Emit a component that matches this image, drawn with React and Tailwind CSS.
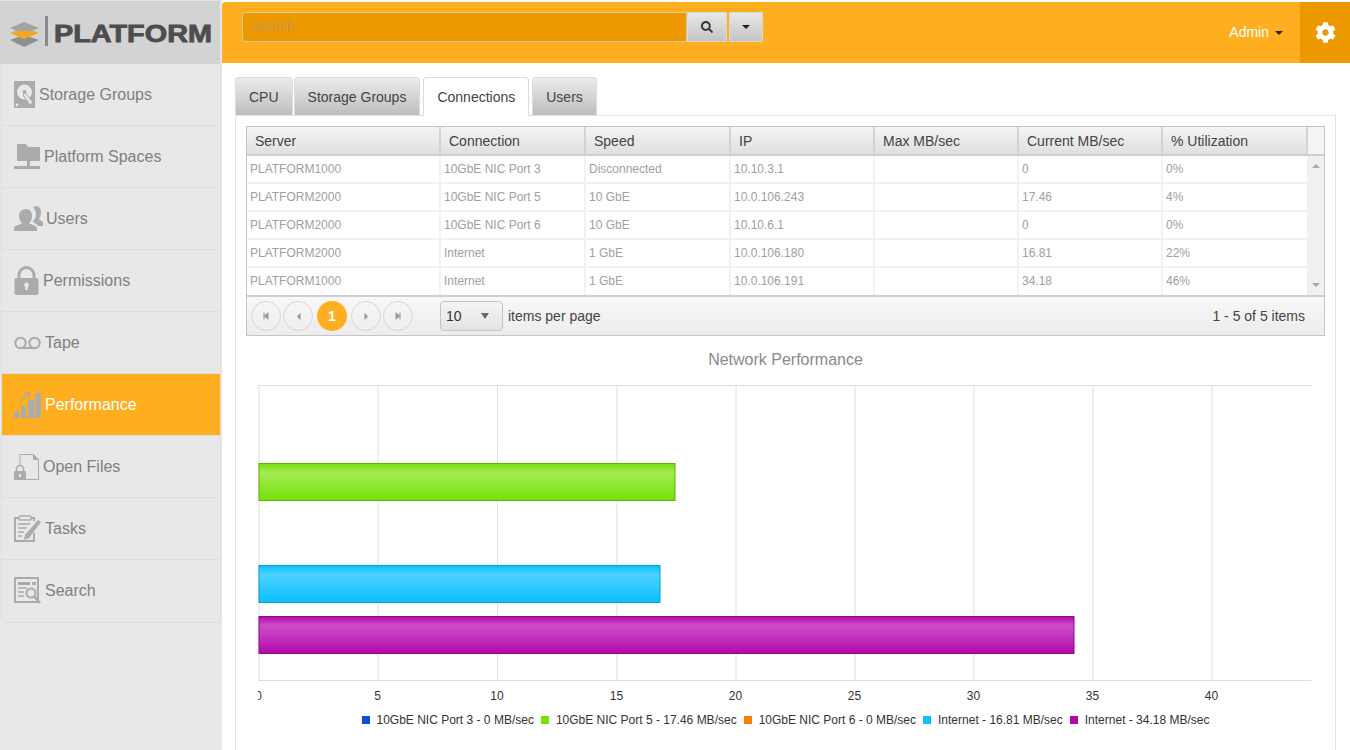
import { FaSearch, FaCog, FaStepBackward, FaStepForward, FaCaretLeft, FaCaretRight } from "react-icons/fa";

const GRAY = "#ababab";

function DiskIcon() {
    return (
        <svg width="25" height="28" viewBox="0 0 25 28">
            <path fill={GRAY} d="M0 0h21v27H0z" />
            <circle cx="10.5" cy="11" r="7.5" fill="#e8e8e8" />
            <circle cx="10.5" cy="11" r="2" fill={GRAY} />
            <path fill="#e8e8e8" stroke={GRAY} d="M9 14l2-2 8 9-3 3z" />
            <circle cx="3" cy="24" r="1.4" fill="#e8e8e8" />
        </svg>
    );
}

function SpacesIcon() {
    return (
        <svg width="30" height="28" viewBox="0 0 30 28">
            <path fill={GRAY} d="M3 1h9l2 3h12v14H3z" />
            <path fill={GRAY} d="M13 18h3v5h-3zM0 23h26v3H0z" />
        </svg>
    );
}

function UsersIcon() {
    return (
        <svg width="32" height="26" viewBox="0 0 32 26">
            <path fill={GRAY} d="M19 1c4-2 8 0 8 5 0 3-1 5-2 7 2 2 4 2 4 4v3h-5c-1-3-5-3-5-5 2-2 3-4 3-7 0-2-1-5-3-7z" />
            <path fill={GRAY} d="M12 3c4 0 6 3 6 7 0 3-1 5-3 7 2 2 8 2 8 6v2H0v-2c0-4 6-4 8-6-2-2-3-4-3-7 0-4 3-7 7-7z" />
        </svg>
    );
}

function LockIcon() {
    return (
        <svg width="29" height="30" viewBox="0 0 29 30">
            <path fill="none" stroke={GRAY} strokeWidth="3" d="M5 13V9a7.5 7.5 0 0 1 15 0v4" />
            <rect x="0.5" y="12" width="24" height="17" rx="2" fill={GRAY} />
            <circle cx="12.5" cy="19" r="2.4" fill="#e8e8e8" />
            <path fill="#e8e8e8" d="M11.3 19h2.4v5h-2.4z" />
        </svg>
    );
}

function TapeIcon() {
    return (
        <svg width="31" height="14" viewBox="0 0 31 14">
            <circle cx="6.5" cy="7" r="5.2" fill="none" stroke={GRAY} strokeWidth="2" />
            <circle cx="20.5" cy="7" r="5.2" fill="none" stroke={GRAY} strokeWidth="2" />
            <path fill={GRAY} d="M6 11h15v2H6z" />
        </svg>
    );
}

function BarsIcon() {
    return (
        <svg width="31" height="28" viewBox="0 0 31 28">
            <path fill={GRAY} d="M0 20h5v7H0zM7 15h5v12H7zM14 9h6v18h-6zM21 2h6v25h-6z" />
            <path fill="none" stroke={GRAY} strokeWidth="1.5" d="M7 9l7-6M10 2h5v5" />
        </svg>
    );
}

function FileLockIcon() {
    return (
        <svg width="29" height="28" viewBox="0 0 29 28">
            <path fill="none" stroke={GRAY} strokeWidth="1" d="M6 13V1.5h13.500l5 5v20h-13" />
            <path fill={GRAY} d="M19 1v6h6z" />
            <path fill="none" stroke={GRAY} strokeWidth="1.500" d="M2.500 18v-2a3.500 3.500 0 0 1 7 0v2" />
            <rect x="0" y="18" width="12" height="9" rx="1" fill={GRAY} />
            <rect x="5" y="21" width="2" height="3" fill="#e8e8e8" />
        </svg>
    );
}

function TasksIcon() {
    return (
        <svg width="31" height="28" viewBox="0 0 31 28">
            <path fill="none" stroke={GRAY} strokeWidth="2" d="M20 6V3h-3M5 3H1v23h19v-8" />
            <rect x="5" y="1" width="12" height="4" rx="1" fill="none" stroke={GRAY} strokeWidth="1.500" />
            <path stroke={GRAY} strokeWidth="1.500" d="M4 9h12M4 13h9M4 17h6M4 21h4" />
            <path fill={GRAY} d="M24 5l3 2-12 16-5 2 1-5z" />
        </svg>
    );
}

function SearchDocIcon() {
    return (
        <svg width="31" height="28" viewBox="0 0 31 28">
            <path fill="none" stroke={GRAY} strokeWidth="2" d="M1 1h23v24H1z" />
            <path fill={GRAY} d="M4 5h12v3H4zM18 5h4v3h-4z" />
            <path stroke={GRAY} strokeWidth="1.500" d="M4 11h9M4 15h6M4 19h6" />
            <circle cx="17" cy="16" r="4.500" fill="#e8e8e8" stroke={GRAY} strokeWidth="2" />
            <path stroke={GRAY} strokeWidth="2.500" d="M20 19l6 7" />
        </svg>
    );
}

const menu = [
    { label: "Storage Groups", icon: DiskIcon },
    { label: "Platform Spaces", icon: SpacesIcon },
    { label: "Users", icon: UsersIcon },
    { label: "Permissions", icon: LockIcon },
    { label: "Tape", icon: TapeIcon },
    { label: "Performance", icon: BarsIcon, active: true },
    { label: "Open Files", icon: FileLockIcon },
    { label: "Tasks", icon: TasksIcon },
    { label: "Search", icon: SearchDocIcon },
];

const rows = [
    ["PLATFORM1000", "10GbE NIC Port 3", "Disconnected", "10.10.3.1", "", "0", "0%"],
    ["PLATFORM2000", "10GbE NIC Port 5", "10 GbE", "10.0.106.243", "", "17.46", "4%"],
    ["PLATFORM2000", "10GbE NIC Port 6", "10 GbE", "10.10.6.1", "", "0", "0%"],
    ["PLATFORM2000", "Internet", "1 GbE", "10.0.106.180", "", "16.81", "22%"],
    ["PLATFORM1000", "Internet", "1 GbE", "10.0.106.191", "", "34.18", "46%"],
];

const columns = ["Server", "Connection", "Speed", "IP", "Max MB/sec", "Current MB/sec", "% Utilization"];
const tabs = ["CPU", "Storage Groups", "Connections", "Users"];

const legend = [
    ["10GbE NIC Port 3 - 0 MB/sec", "bg-[#0a4be0]"],
    ["10GbE NIC Port 5 - 17.46 MB/sec", "bg-[#76e008]"],
    ["10GbE NIC Port 6 - 0 MB/sec", "bg-[#ff7f00]"],
    ["Internet - 16.81 MB/sec", "bg-[#0cbfff]"],
    ["Internet - 34.18 MB/sec", "bg-[#b308a9]"],
];

function Sidebar() {
    return (
        <div className="w-[222px] shrink-0 bg-[#e8e8e8]">
            <div className="h-[64px] bg-[#d3d3d3] border-t border-[#e4e4e4] border-r-2 border-r-[#e8e8e8] flex items-center pl-[9px]">
                <svg width="206" height="34" viewBox="0 0 206 34">
                    <path fill="#a3a3a3" d="M1 12l14-6 15 6-15 6z" />
                    <path fill="#8f8f8f" d="M1 24l14-5 15 5-15 7z" />
                    <path fill="#f5a623" d="M1 17l5-2h19l5 2-15 6z" />
                    <path fill="#8a8a8a" d="M36 0h3v30h-3z" />
                    <text x="45" y="26" textLength="158" lengthAdjust="spacingAndGlyphs" fontSize="23" fontWeight="700" fill="#4d4d4d" stroke="#4d4d4d" strokeWidth="0.8">PLATFORM</text>
                </svg>
            </div>
            <div className="mx-[1px] mr-[1px] border border-[#dcdcdc] border-t-0 rounded-b-[4px] overflow-hidden">
                {menu.map((item) => {
                    const Icon = item.icon;
                    return (
                        <div
                            key={item.label}
                            className={`h-[62px] flex items-center pl-[12px] border-b border-[#dedede] last:border-b-0 text-[16px] ${item.active ? "bg-[#ffae1f] text-white" : "text-[#808080]"}`}
                        >
                            <Icon />
                            <span>{item.label}</span>
                        </div>
                    );
                })}
            </div>
        </div>
    );
}

function Topbar() {
    return (
        <div className="mt-[2px] h-[61px] bg-[#ffae1f] rounded-tl-[4px] flex items-start shrink-0">
            <div className="mt-[10px] ml-[20px] flex">
                <div className="w-[445px] h-[30px] bg-[#ee9800] border border-[#d9c9a5] rounded-l-[4px] px-[7px] text-[14px] leading-[26px] text-[#c49a4a]">
                    Search
                </div>
                <div className="w-[40px] h-[30px] flex items-center justify-center bg-gradient-to-b from-[#e8e8e8] to-[#c4c4c4] text-[#333] border border-[#d8d8d8]">
                    <FaSearch size={12} />
                </div>
                <div className="ml-[2px] w-[34px] h-[30px] flex items-center justify-center bg-gradient-to-b from-[#e8e8e8] to-[#c4c4c4] border border-[#d8d8d8]">
                    <span className="border-x-[4px] border-x-transparent border-t-[4px] border-t-[#222]" />
                </div>
            </div>
            <div className="ml-auto h-full flex items-center text-white text-[14px]">
                Admin
                <span className="ml-[6px] mr-[17px] border-x-[4px] border-x-transparent border-t-[4px] border-t-[#222]" />
            </div>
            <div className="w-[50px] h-full bg-[#ee9800] flex items-center justify-center text-white">
                <FaCog size={21} />
            </div>
        </div>
    );
}

function PagerButton({ children }) {
    return (
        <div className="w-[30px] h-[30px] rounded-full border border-[#d6d6d6] flex items-center justify-center text-[#9a9a9a]">
            {children}
        </div>
    );
}

function Grid() {
    return (
        <div className="border border-[#c4c4c4]">
            <div className="flex h-[29px] border-b-2 border-[#cfcfcf]">
                <div className="w-[1061px] grid grid-cols-[194px_145px_145px_144px_144px_144px_145px] bg-gradient-to-b from-[#f4f4f4] to-[#e0e0e0]">
                    {columns.map((c) => (
                        <div key={c} className="border-r-2 border-[#d4d4d4] pl-[8px] text-[14px] leading-[28px] text-[#444]">
                            {c}
                        </div>
                    ))}
                </div>
                <div className="grow bg-[#f4f4f4]" />
            </div>
            <div className="flex">
                <div className="w-[1060px]">
                    {rows.map((r, i) => (
                        <div key={i} className="grid grid-cols-[194px_145px_145px_144px_144px_144px_144px] h-[28px] border-b-2 border-[#f2f2f2] last:h-[27px] last:border-b-0">
                            {r.map((cell, j) => (
                                <div key={j} className="border-r-2 border-[#f2f2f2] last:border-r-0 pl-[3px] text-[12px] leading-[27px] text-[#a0a0a0]">
                                    {cell}
                                </div>
                            ))}
                        </div>
                    ))}
                </div>
                <div className="grow bg-[#f0f0f0] flex flex-col items-center justify-between py-[8px]">
                    <span className="border-x-[4px] border-x-transparent border-b-[4px] border-b-[#aaa]" />
                    <span className="border-x-[4px] border-x-transparent border-t-[4px] border-t-[#aaa]" />
                </div>
            </div>
            <div className="h-[40px] border-t-2 border-[#cfcfcf] bg-gradient-to-b from-[#f8f8f8] to-[#ececec] flex items-center pl-[4px] pr-[19px] text-[14px] text-[#444]">
                <div className="flex items-center gap-[2px]">
                    <PagerButton><FaStepBackward size={8} /></PagerButton>
                    <PagerButton><FaCaretLeft size={11} /></PagerButton>
                    <div className="mx-[2px] w-[30px] h-[30px] rounded-full bg-[#ffae1f] text-white font-bold flex items-center justify-center">1</div>
                    <PagerButton><FaCaretRight size={11} /></PagerButton>
                    <PagerButton><FaStepForward size={8} /></PagerButton>
                </div>
                <div className="ml-[27px] w-[63px] h-[30px] border border-[#c4c4c4] rounded-[4px] bg-gradient-to-b from-[#f4f4f4] to-[#e4e4e4] flex items-center justify-between pl-[5px] pr-[13px] text-[#333]">
                    10
                    <span className="border-x-[4px] border-x-transparent border-t-[6px] border-t-[#666]" />
                </div>
                <span className="ml-[5px]">items per page</span>
                <span className="ml-auto">1 - 5 of 5 items</span>
            </div>
        </div>
    );
}

const ticks = [0, 5, 10, 15, 20, 25, 30, 35, 40];
const tickX = [0, 119, 238.500, 358, 477, 596, 715, 834, 953];

function Bar({ y, w, fill, stroke }) {
    return <rect x="0.500" y={y + 0.5} width={w} height="37" fill={`url(#${fill})`} stroke={stroke} />;
}

function BarGradient({ id, base, light }) {
    return (
        <linearGradient id={id} x1="0" y1="0" x2="0" y2="1">
            <stop offset="0" stopColor={base} />
            <stop offset="0.25" stopColor={light} />
            <stop offset="1" stopColor={base} />
        </linearGradient>
    );
}

function Chart() {
    return (
        <svg width="1070" height="332" viewBox="-0.5 0 1070 332" className="block ml-[12px] mt-[15px] [font-family:'Liberation_Sans',sans-serif]">
            <defs>
                <BarGradient id="green" base="#76e008" light="#a2ec52" />
                <BarGradient id="blue" base="#0cbfff" light="#4cd2ff" />
                <BarGradient id="purple" base="#b308a9" light="#cc4fc8" />
            </defs>
            <path stroke="#dedede" d="M0 0.500H1053M0 295.500H1053" />
            {tickX.map((x) => (
                <path key={x} stroke="#dedede" d={`M${x + 0.5} 0V296`} />
            ))}
            <Bar y={78} w={416} fill="green" stroke="#5fb000" />
            <Bar y={180} w={401} fill="blue" stroke="#00a0d8" />
            <Bar y={231} w={815} fill="purple" stroke="#950096" />
            {ticks.map((t, i) => (
                <text key={t} x={tickX[i]} y="315" textAnchor="middle" fontSize="12" fill="#333">{t}</text>
            ))}
        </svg>
    );
}

export default function App() {
    return (
        <div className="flex w-[1350px] h-[750px] overflow-hidden bg-white [font-family:'Liberation_Sans',sans-serif]">
            <Sidebar />
            <div className="grow min-w-0 flex flex-col">
                <Topbar />
                <div className="mt-[14px] ml-[13px] flex gap-[1px] h-[38px] shrink-0">
                    {tabs.map((t) => (
                        <div
                            key={t}
                            className={`px-[13px] text-[14px] leading-[38px] text-[#444] rounded-t-[4px] border border-[#dcdcdc] border-b-0 ${t === "Connections" ? "bg-white mx-[2px] h-[39px] relative z-10" : "bg-gradient-to-b from-[#ececec] to-[#bdbdbd]"}`}
                        >
                            {t}
                        </div>
                    ))}
                </div>
                <div className="grow mx-[13px] mr-[14px] border border-[#e4e4e4] border-b-0 px-[10px] pt-[10px]">
                    <Grid />
                    <div className="mt-[14px] text-center text-[16px] leading-[20px] text-[#8a8a8a]">Network Performance</div>
                    <Chart />
                    <div className="mt-[-4px] flex justify-center gap-[7px] pl-[-1px] text-[12px] leading-[14px] text-[#333]">
                        {legend.map(([label, color]) => (
                            <div key={label} className="flex items-center gap-[7px]">
                                <span className={`w-[8px] h-[8px] ${color}`} />
                                {label}
                            </div>
                        ))}
                    </div>
                </div>
            </div>
        </div>
    );
}
